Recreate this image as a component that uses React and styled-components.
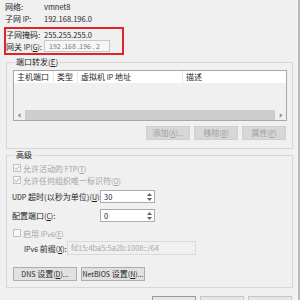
import React from 'react'
import styled, { createGlobalStyle } from 'styled-components'

const GlobalStyle = createGlobalStyle`
    html, body {
        margin: 0;
        padding: 0;
        background: #f0f0f0;
    }
    body {
        font-family: "Noto Sans CJK SC", "Noto Sans", sans-serif;
        font-size: 8px;
        color: #1e1e1e;
    }
    * {
        box-sizing: border-box;
    }
`

function Check() {
    return (
        <svg width="6" height="6" viewBox="0 0 6 6">
            <polyline points="0.6,3.2 2.3,4.8 5.4,1.2" fill="none" stroke="#a8a8a8" strokeWidth="1" />
        </svg>
    )
}

function Spin({ value }) {
    return (
        <SpinBox>
            <span>{value}</span>
            <Arrows>
                <svg width="5" height="3" viewBox="0 0 5 3"><polygon points="0,3 5,3 2.5,0" fill="#606060" /></svg>
                <svg width="5" height="3" viewBox="0 0 5 3"><polygon points="0,0 5,0 2.5,3" fill="#606060" /></svg>
            </Arrows>
        </SpinBox>
    )
}

function App() {
    return (
        <Window>
            <GlobalStyle />
            <Dialog>
                <Info>
                    <InfoRow h={11}>
                        <Label w={39}>网络:</Label>
                        <Value>vmnet8</Value>
                    </InfoRow>
                    <InfoRow h={12}>
                        <Label w={39}>子网 <Latin>IP</Latin>:</Label>
                        <Value>192.168.196.0</Value>
                    </InfoRow>
                    <Highlight>
                        <InfoRow h={10}>
                            <Label w={38}>子网掩码:</Label>
                            <Value>255.255.255.0</Value>
                        </InfoRow>
                        <InfoRow h={14}>
                            <Label w={38}>网关 <Latin>IP(<u>G</u>)</Latin>:</Label>
                            <IpBox>192 .168 .196 . 2</IpBox>
                        </InfoRow>
                    </Highlight>
                </Info>

                <Group mt={2}>
                    <Legend>端口转发(<u>E</u>)</Legend>
                    <List>
                        <ListHeader>
                            <HeadCell>主机端口</HeadCell>
                            <HeadCell>类型</HeadCell>
                            <HeadCell>虚拟机 <Latin>IP</Latin> 地址</HeadCell>
                            <HeadCell last>描述</HeadCell>
                        </ListHeader>
                        <ListBody />
                        <HScroll>
                            <ScrollArrow>‹</ScrollArrow>
                            <Thumb />
                            <ScrollArrow>›</ScrollArrow>
                        </HScroll>
                    </List>
                    <ButtonRow>
                        <Button disabled>添加<Latin>(<u>A</u>)...</Latin></Button>
                        <Button disabled>移除<Latin>(<u>R</u>)</Latin></Button>
                        <Button disabled>属性<Latin>(<u>P</u>)</Latin></Button>
                    </ButtonRow>
                </Group>

                <Group mt={1} pb={6}>
                    <Legend>高级</Legend>
                    <CheckRow mt={2}>
                        <Box><Check /></Box>
                        <Dim>允许活动的 <Latin>FTP(<u>T</u>)</Latin></Dim>
                    </CheckRow>
                    <CheckRow>
                        <Box><Check /></Box>
                        <Dim>允许任何组织唯一标识符<Latin>(<u>O</u>)</Latin></Dim>
                    </CheckRow>
                    <FieldRow mt={4}>
                        <FieldLabel><Latin>UDP</Latin> 超时(以秒为单位)<Latin>(<u>U</u>)</Latin>:</FieldLabel>
                        <Spin value="30" />
                    </FieldRow>
                    <FieldRow mt={6}>
                        <FieldLabel>配置端口<Latin>(<u>C</u>)</Latin>:</FieldLabel>
                        <Spin value="0" />
                    </FieldRow>
                    <CheckRow mt={5}>
                        <Box />
                        <Dim>启用 <Latin>IPv6(<u>E</u>)</Latin></Dim>
                    </CheckRow>
                    <PrefixRow>
                        <PrefixLabel><Latin>IPv6</Latin> 前缀<Latin>(<u>X</u>)</Latin>:</PrefixLabel>
                        <PrefixBox>fd15:4ba5:5a2b:1008::/64</PrefixBox>
                    </PrefixRow>
                    <SettingsRow>
                        <Button wide><Latin>DNS</Latin> 设置<Latin>(<u>D</u>)...</Latin></Button>
                        <Button wide><Latin>NetBIOS</Latin> 设置<Latin>(<u>N</u>)...</Latin></Button>
                    </SettingsRow>
                </Group>

                <FooterRow>
                    <FooterButton focus />
                    <FooterButton />
                    <FooterButton />
                </FooterRow>
            </Dialog>
            <Edge />
        </Window>
    )
}

export default App

const Window = styled.div`
    width: 300px;
    height: 300px;
    overflow: hidden;
    display: flex;
    background: #f0f0f0;
`

const Dialog = styled.div`
    flex: 1;
    display: flex;
    flex-direction: column;
`

const Edge = styled.div`
    width: 4px;
    border-right: 2px solid #b9b9b9;
    background: #f3f3f3;
`

const Latin = styled.span`
    font-size: 7px;
`

const Info = styled.div`
    padding: 1px 0 0 5px;
`

const InfoRow = styled.div`
    display: flex;
    align-items: center;
    height: ${props => props.h}px;
    white-space: nowrap;
`

const Label = styled.span`
    width: ${props => props.w}px;
    flex: none;
`

const Value = styled.span`
    font-size: 7.5px;
`

const Highlight = styled.div`
    margin: 3px 0 0 -1px;
    width: 120px;
    border: 2px solid #e2232e;
`

const IpBox = styled.div`
    width: 66px;
    height: 12px;
    border: 1px solid #c9c9c9;
    background: #f6f6f6;
    color: #7a7a7a;
    font-size: 7px;
    line-height: 10px;
    padding-left: 4px;
    white-space: pre;
`

const Group = styled.fieldset`
    margin: ${props => props.mt}px 3px 0 6px;
    padding: 0 5px ${props => props.pb ?? 8}px 6px;
    border: 1px solid #d7d7d7;
    min-width: 0;
`

const Legend = styled.legend`
    padding: 0 1px;
    margin-left: 2px;
    line-height: 10px;
`

const List = styled.div`
    margin-top: 3px;
    height: 51px;
    border: 1px solid #a7a7a7;
    background: #f0f0f0;
    display: flex;
    flex-direction: column;
`

const ListHeader = styled.div`
    display: grid;
    grid-template-columns: 40px 24px 105px 1fr;
    height: 12px;
    background: #fff;
`

const HeadCell = styled.div`
    padding-left: 3px;
    line-height: 12px;
    border-right: ${props => (props.last ? 'none' : '1px solid #e5e5e5')};
    white-space: nowrap;
`

const ListBody = styled.div`
    flex: 1;
`

const HScroll = styled.div`
    height: 10px;
    display: flex;
    align-items: center;
    background: #f0f0f0;
`

const ScrollArrow = styled.span`
    width: 11px;
    text-align: center;
    font-family: "DejaVu Sans", sans-serif;
    font-size: 9px;
    font-weight: bold;
    line-height: 10px;
    color: #606060;
`

const Thumb = styled.div`
    flex: 1;
    height: 10px;
    background: #cdcdcd;
`

const ButtonRow = styled.div`
    display: flex;
    justify-content: flex-end;
    gap: 4px;
    margin-top: 5px;
    padding-right: 1px;
`

const Button = styled.button`
    width: ${props => (props.wide ? 64 : 44)}px;
    height: 14px;
    padding: 0;
    font-family: inherit;
    font-size: 8px;
    line-height: 12px;
    border: 1px solid ${props => (props.disabled ? '#cfcfcf' : '#adadad')};
    background: ${props => (props.disabled ? '#d7d7d7' : '#e1e1e1')};
    color: ${props => (props.disabled ? '#a0a0a0' : '#1e1e1e')};
    white-space: nowrap;
`

const CheckRow = styled.div`
    display: flex;
    align-items: center;
    gap: 2px;
    height: 12px;
    margin-top: ${props => props.mt ?? 0}px;
`

const Box = styled.div`
    width: 8px;
    height: 8px;
    border: 1px solid #c2c2c2;
    background: #f7f7f7;
    display: flex;
    align-items: center;
    justify-content: center;
`

const Dim = styled.span`
    color: #a3a3a3;
    white-space: nowrap;
`

const FieldRow = styled.div`
    display: grid;
    grid-template-columns: 87px 55px;
    align-items: center;
    margin-top: ${props => props.mt}px;
`

const FieldLabel = styled.span`
    margin-left: -1px;
    white-space: nowrap;
`

const SpinBox = styled.div`
    height: 13px;
    border: 1px solid #acacac;
    background: #fff;
    display: flex;
    align-items: center;
    justify-content: space-between;
    padding: 0 2px 0 3px;
    color: #23235a;
    font-size: 7.5px;
`

const Arrows = styled.div`
    display: flex;
    flex-direction: column;
    gap: 2px;
`

const PrefixRow = styled.div`
    display: flex;
    align-items: center;
    margin-top: 2px;
    padding-left: 11px;
`

const PrefixLabel = styled.span`
    width: 43px;
    flex: none;
    white-space: nowrap;
`

const PrefixBox = styled.div`
    width: 129px;
    height: 14px;
    border: 1px solid #dadada;
    background: #f0f0f0;
    color: #a8a8a8;
    font-size: 7.5px;
    line-height: 12px;
    padding-left: 3px;
    white-space: nowrap;
`

const SettingsRow = styled.div`
    display: flex;
    gap: 4px;
    margin-top: 12px;
`

const FooterRow = styled.div`
    display: flex;
    justify-content: flex-end;
    gap: 4px;
    margin-top: 8px;
    padding-right: 4px;
`

const FooterButton = styled.div`
    width: 44px;
    height: 14px;
    flex: none;
    border: 1px solid ${props => (props.focus ? '#9a9a9a' : '#c6c6c6')};
    background: #e6e6e6;
`
